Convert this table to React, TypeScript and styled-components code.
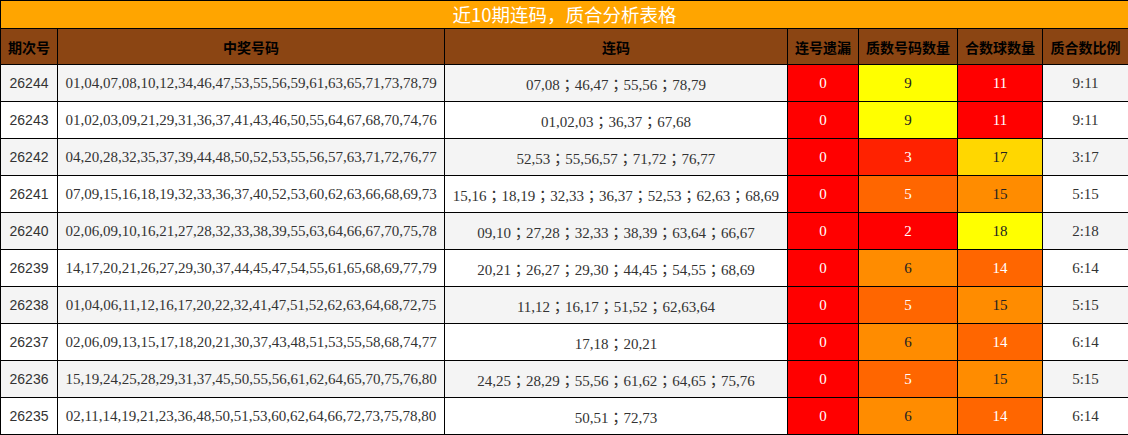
import React from "react";
import styled, { createGlobalStyle } from "styled-components";

const Global = createGlobalStyle`
  html, body { margin: 0; padding: 0; background: #fff; }
  body { font-family: "Liberation Serif", "Noto Sans CJK TC", serif; }
`;

const Table = styled.table`
  width: 1128px;
  border-collapse: collapse;
  table-layout: fixed;
  border: 1px solid #000;
`;

const TitleCell = styled.th`
  height: 27px;
  padding: 0;
  background: #ffa500;
  color: #fff;
  border: 1px solid #000;
  font-family: "Noto Sans CJK SC", sans-serif;
  font-weight: 400;
  font-size: 18.5px;
  line-height: 27px;
  text-align: center;
`;

const HeadCell = styled.th`
  height: 35px;
  padding: 0;
  background: #8b4513;
  color: #000;
  border: 1px solid #000;
  font-family: "Noto Sans CJK SC", sans-serif;
  font-weight: 700;
  font-size: 14px;
  text-align: center;
  white-space: nowrap;
`;

const Row = styled.tr<{ $alt: boolean }>`
  height: 37px;
  background: ${(p) => (p.$alt ? "#f4f4f4" : "#ffffff")};
`;

const Cell = styled.td<{ $bg?: string; $fg?: string; $sans?: boolean }>`
  padding: 0;
  border: 1px solid #000;
  text-align: center;
  vertical-align: middle;
  white-space: nowrap;
  background: ${(p) => p.$bg ?? "transparent"};
  color: ${(p) => p.$fg ?? "#333"};
  font-family: ${(p) =>
    p.$sans
      ? `"Liberation Sans", "Noto Sans CJK TC", sans-serif`
      : `"Liberation Serif", "Noto Sans CJK TC", serif`};
  font-size: ${(p) => (p.$sans ? "14px" : "15px")};
`;

type Shade = { bg: string; fg: string };
const RED: Shade = { bg: "#ff0000", fg: "#ffffff" };
const REDORANGE: Shade = { bg: "#ff2200", fg: "#ffffff" };
const DARKORANGE: Shade = { bg: "#ff6600", fg: "#ffffff" };
const ORANGE: Shade = { bg: "#ff8c00", fg: "#222222" };
const GOLD: Shade = { bg: "#ffd700", fg: "#222222" };
const YELLOW: Shade = { bg: "#ffff00", fg: "#222222" };

const primeShade: Record<number, Shade> = {
  9: YELLOW,
  3: REDORANGE,
  5: DARKORANGE,
  2: RED,
  6: ORANGE,
};
const compShade: Record<number, Shade> = {
  11: RED,
  17: GOLD,
  15: ORANGE,
  18: YELLOW,
  14: DARKORANGE,
};

const rows = [
  ["26244", "01,04,07,08,10,12,34,46,47,53,55,56,59,61,63,65,71,73,78,79", "07,08；46,47；55,56；78,79", 0, 9, 11, "9:11"],
  ["26243", "01,02,03,09,21,29,31,36,37,41,43,46,50,55,64,67,68,70,74,76", "01,02,03；36,37；67,68", 0, 9, 11, "9:11"],
  ["26242", "04,20,28,32,35,37,39,44,48,50,52,53,55,56,57,63,71,72,76,77", "52,53；55,56,57；71,72；76,77", 0, 3, 17, "3:17"],
  ["26241", "07,09,15,16,18,19,32,33,36,37,40,52,53,60,62,63,66,68,69,73", "15,16；18,19；32,33；36,37；52,53；62,63；68,69", 0, 5, 15, "5:15"],
  ["26240", "02,06,09,10,16,21,27,28,32,33,38,39,55,63,64,66,67,70,75,78", "09,10；27,28；32,33；38,39；63,64；66,67", 0, 2, 18, "2:18"],
  ["26239", "14,17,20,21,26,27,29,30,37,44,45,47,54,55,61,65,68,69,77,79", "20,21；26,27；29,30；44,45；54,55；68,69", 0, 6, 14, "6:14"],
  ["26238", "01,04,06,11,12,16,17,20,22,32,41,47,51,52,62,63,64,68,72,75", "11,12；16,17；51,52；62,63,64", 0, 5, 15, "5:15"],
  ["26237", "02,06,09,13,15,17,18,20,21,30,37,43,48,51,53,55,58,68,74,77", "17,18；20,21", 0, 6, 14, "6:14"],
  ["26236", "15,19,24,25,28,29,31,37,45,50,55,56,61,62,64,65,70,75,76,80", "24,25；28,29；55,56；61,62；64,65；75,76", 0, 5, 15, "5:15"],
  ["26235", "02,11,14,19,21,23,36,48,50,51,53,60,62,64,66,72,73,75,78,80", "50,51；72,73", 0, 6, 14, "6:14"],
] as const;

const widths = [57, 387, 343, 71, 99, 85, 86];
const heads = ["期次号", "中奖号码", "连码", "连号遗漏", "质数号码数量", "合数球数量", "质合数比例"];

export default function App() {
  return (
    <>
      <Global />
      <Table>
        <colgroup>
          {widths.map((w, i) => (
            <col key={i} style={{ width: w }} />
          ))}
        </colgroup>
        <thead>
          <tr>
            <TitleCell colSpan={7}>近10期连码，质合分析表格</TitleCell>
          </tr>
          <tr>
            {heads.map((h) => (
              <HeadCell key={h}>{h}</HeadCell>
            ))}
          </tr>
        </thead>
        <tbody>
          {rows.map((r, i) => {
            const p = primeShade[r[4]];
            const c = compShade[r[5]];
            return (
              <Row key={r[0]} $alt={i % 2 === 0}>
                <Cell $sans>{r[0]}</Cell>
                <Cell>{r[1]}</Cell>
                <Cell>{r[2]}</Cell>
                <Cell $bg={RED.bg} $fg={RED.fg}>{r[3]}</Cell>
                <Cell $bg={p.bg} $fg={p.fg}>{r[4]}</Cell>
                <Cell $bg={c.bg} $fg={c.fg}>{r[5]}</Cell>
                <Cell>{r[6]}</Cell>
              </Row>
            );
          })}
        </tbody>
      </Table>
    </>
  );
}
